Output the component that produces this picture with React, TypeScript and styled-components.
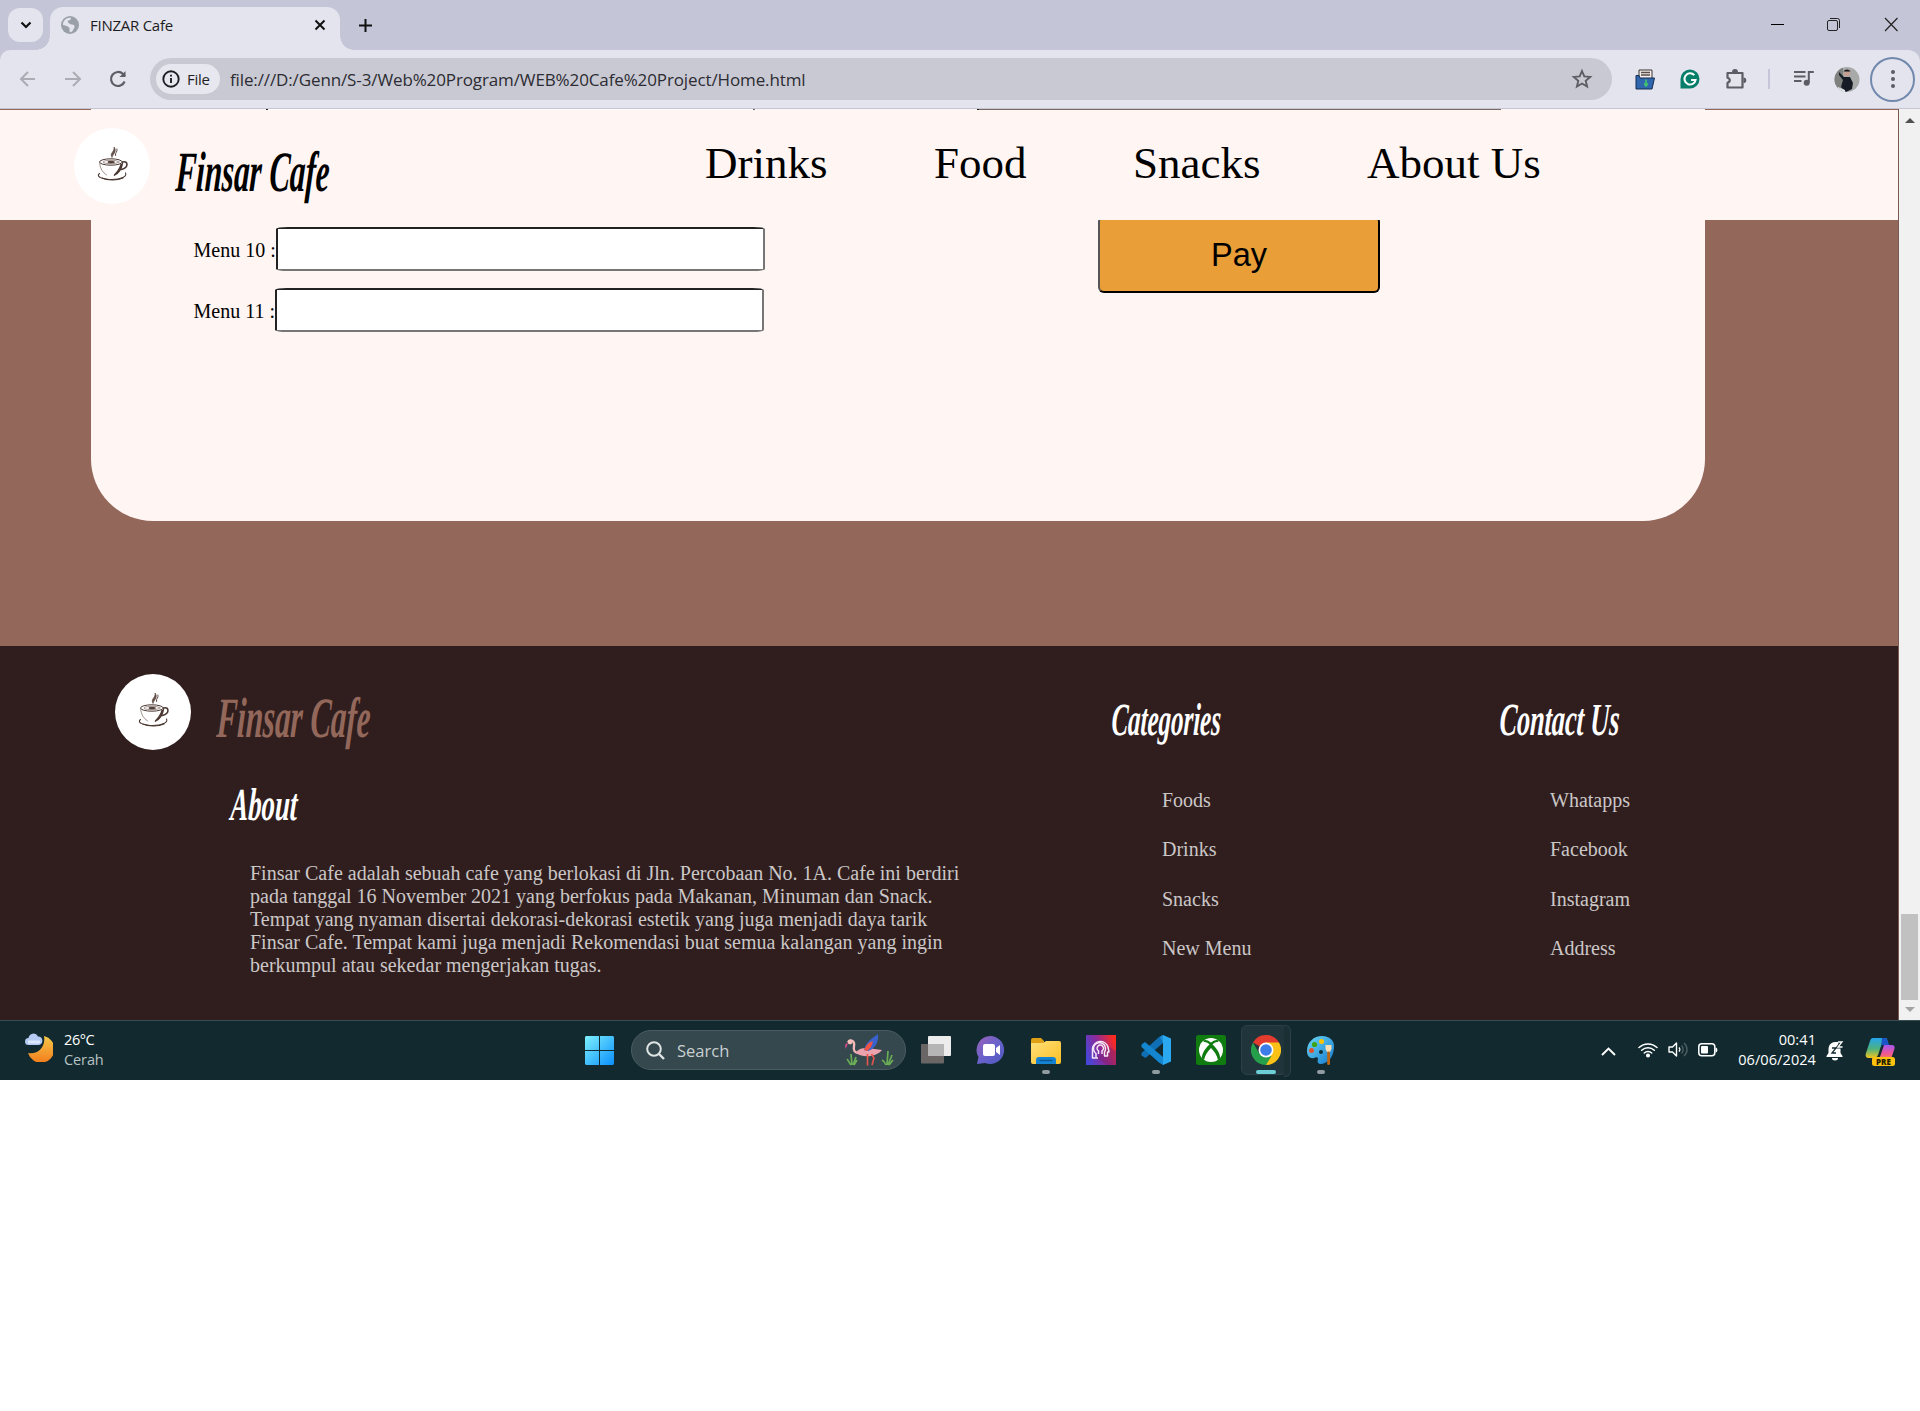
import React from "react";
import styled, { createGlobalStyle } from "styled-components";

const Global = createGlobalStyle`
  * { box-sizing: border-box; }
  body { margin: 0; background: #fff; }
`;

const UI = `"Open Sans", "Noto Sans", sans-serif`;
const SERIF = `"Liberation Serif", "Times New Roman", serif`;

const Screen = styled.div`
  width: 1920px;
  height: 1080px;
  display: flex;
  flex-direction: column;
  overflow: hidden;
`;

/* ---------- browser chrome ---------- */

const TabStrip = styled.div`
  height: 50px;
  flex: none;
  display: flex;
  align-items: flex-start;
  background: #c5c5d8;
  padding-left: 8px;
`;

const TabSearch = styled.div`
  width: 35px;
  height: 34px;
  margin-top: 8px;
  border-radius: 12px;
  background: #e4e4ee;
  display: grid;
  place-items: center;
`;

const Tab = styled.div`
  position: relative;
  width: 290px;
  height: 43px;
  margin: 7px 0 0 7px;
  padding: 0 13px 7px 11px;
  border-radius: 13px 13px 0 0;
  background: #e4e4ee;
  display: flex;
  align-items: center;
  &::before,
  &::after {
    content: "";
    position: absolute;
    bottom: 0;
    width: 14px;
    height: 14px;
  }
  &::before {
    left: -14px;
    background: radial-gradient(circle at 0 0, transparent 13.5px, #e4e4ee 14px);
  }
  &::after {
    right: -14px;
    background: radial-gradient(circle at 100% 0, transparent 13.5px, #e4e4ee 14px);
  }
`;

const TabTitle = styled.span`
  flex: 1;
  margin-left: 11px;
  font: 15px/20px ${UI};
  letter-spacing: -0.26px;
  color: #1c1c20;
`;

const NewTab = styled.div`
  margin: 18px 0 0 18px;
  height: 15px;
  display: flex;
`;

const WindowButtons = styled.div`
  margin: 17px 21px 0 auto;
  display: flex;
  gap: 42px;
`;

const ToolbarBack = styled.div`
  flex: none;
  height: 59px;
  background: #c5c5d8;
`;

const Toolbar = styled.div`
  height: 59px;
  display: flex;
  align-items: center;
  background: #e4e4ee;
  border-radius: 10px 12px 0 0;
  border-bottom: 1px solid #c5c5d3;
  padding-left: 19px;
`;

const NavIcons = styled.div`
  display: flex;
  gap: 27px;
  width: 131px;
`;

const Omnibox = styled.div`
  width: 1462px;
  height: 42px;
  border-radius: 21px;
  background: #c9c9d3;
  display: flex;
  align-items: center;
  padding: 0 19px 0 6px;
`;

const Chip = styled.div`
  width: 64px;
  height: 30px;
  border-radius: 15px;
  background: #e7e7f0;
  display: flex;
  align-items: center;
  gap: 7px;
  padding-left: 6px;
  font: 500 15px/20px ${UI};
  letter-spacing: -0.3px;
  color: #1f1f23;
`;

const Url = styled.span`
  flex: 1;
  margin: 1px 0 0 10px;
  font: 17px/24px ${UI};
  letter-spacing: -0.12px;
  color: #2c2c32;
  white-space: nowrap;
`;

const Extensions = styled.div`
  flex: 1;
  display: flex;
  align-items: center;
  padding-left: 21px;
`;

const Slot = styled.div<{ $w: number }>`
  width: ${(p) => p.$w}px;
  flex: none;
  display: flex;
  justify-content: center;
`;

const Separator = styled.div`
  width: 2px;
  height: 20px;
  margin: 0 11px 0 10px;
  background: #c5c5d8;
`;

const Avatar = styled.div`
  display: flex;
  margin-left: 8px;
`;

const MenuRing = styled.div`
  width: 45px;
  height: 45px;
  margin-left: 10px;
  border: 2px solid #7189ad;
  border-radius: 50%;
  display: flex;
  flex-direction: column;
  align-items: center;
  justify-content: center;
  gap: 3px;
`;

const Dot = styled.i`
  width: 4px;
  height: 4px;
  border-radius: 50%;
  background: #5b5e64;
`;

/* ---------- cafe page ---------- */

const Viewport = styled.div`
  height: 911px;
  flex: none;
  display: flex;
`;

const Page = styled.div`
  width: 1899px;
  border-right: 1px solid #7a5b52;
  background: #93685b;
  display: flex;
  flex-direction: column;
`;

const Sliver = styled.div`
  height: 1px;
  flex: none;
  background: linear-gradient(
    90deg,
    #93685b 91px,
    #fff5f2 91px 266px,
    #222 266px 268px,
    #fff 268px 753px,
    #666 753px 755px,
    #fff5f2 755px 977px,
    #222 977px 979px,
    #7c6964 979px 1501px,
    #fff5f2 1501px 1705px,
    #93685b 1705px
  );
`;

const Header = styled.header`
  height: 110px;
  flex: none;
  background: #fff5f2;
  display: flex;
  padding: 18px 0 0 74px;
`;

const BrandRow = styled.div`
  display: flex;
  width: 631px;
  height: 76px;
`;

const Circle = styled.div`
  width: 76px;
  height: 76px;
  flex: none;
  border-radius: 50%;
  background: #fff;
  display: grid;
  place-items: center;
`;

const Script = styled.span<{ $size: number; $scale: number; $color: string }>`
  display: block;
  width: max-content;
  height: ${(p) => p.$size}px;
  font: italic bold ${(p) => p.$size}px/${(p) => p.$size}px ${SERIF};
  color: ${(p) => p.$color};
  transform: scaleX(${(p) => p.$scale}) skewX(-5deg);
  transform-origin: 0 80%;
  white-space: nowrap;
`;

const BrandName = styled.div`
  margin: 15px 0 0 25px;
`;

const Nav = styled.nav`
  display: flex;
  gap: 106.5px;
  padding-top: 9px;
`;

const NavLink = styled.a`
  font: 45px/52px ${SERIF};
  color: #000;
  white-space: nowrap;
`;

const Main = styled.main`
  height: 426px;
  flex: none;
  padding: 0 193px 0 91px;
`;

const Card = styled.section`
  height: 301px;
  border-radius: 0 0 62px 62px;
  background: #fff5f2;
  display: flex;
  justify-content: space-between;
  padding: 7px 325px 0 102.5px;
`;

const Field = styled.label`
  display: flex;
  align-items: center;
  height: 44px;
  margin-bottom: 17px;
  font: 20px/23px ${SERIF};
  color: #000;
`;

const FieldName = styled.span`
  padding-top: 3px;
`;

const Input = styled.input`
  width: 489px;
  height: 44px;
  padding: 0;
  border: 2px solid;
  border-color: #222 #767676 #767676 #222;
  border-radius: 12px / 2px;
  background: #fff;
`;

const PayClip = styled.div`
  height: 73px;
  margin-top: -7px;
  overflow: hidden;
  display: flex;
  align-items: flex-end;
`;

const PayButton = styled.button`
  flex: none;
  width: 282px;
  height: 77px;
  padding: 0;
  border: 2px solid;
  border-color: #555 #000 #000 #555;
  border-radius: 6px;
  background: #e99e38;
  font: 32.5px/36px "Liberation Sans", Arial, sans-serif;
  color: #000;
`;

const Footer = styled.footer`
  height: 374px;
  flex: none;
  background: #301e1e;
  display: flex;
  padding: 28px 0 0 115px;
`;

const AboutCol = styled.div`
  width: 996px;
`;

const AboutTitle = styled.div`
  margin: 32px 0 0 115px;
`;

const Paragraph = styled.p`
  width: 720px;
  margin: 34px 0 0 135px;
  font: 20px/23px ${SERIF};
  color: #cbc7c7;
`;

const LinkCol = styled.div`
  width: 388px;
  padding-top: 23px;
`;

const LinkList = styled.ul`
  list-style: none;
  margin: 46px 0 0 51px;
  padding: 0;
  display: flex;
  flex-direction: column;
  gap: 26.3px;
`;

const LinkItem = styled.li`
  font: 20px/23px ${SERIF};
  color: #cbc7c7;
`;

const Scrollbar = styled.div`
  width: 21px;
  background: #f1f1f1;
  display: flex;
  flex-direction: column;
  align-items: center;
  justify-content: space-between;
  padding: 9px 0 8px;
`;

const Thumb = styled.div`
  width: 17px;
  height: 86px;
  margin: auto 0 7px;
  background: #c1c1c1;
`;

const Arrow = styled.div<{ $down?: boolean }>`
  width: 0;
  height: 0;
  border: 5px solid transparent;
  border-top: ${(p) => (p.$down ? "5px solid #a3a3a3" : "0")};
  border-bottom: ${(p) => (p.$down ? "0" : "5px solid #505050")};
`;

/* ---------- taskbar ---------- */

const Taskbar = styled.div`
  height: 60px;
  flex: none;
  background: #122a2f;
  border-top: 1px solid #3a4c50;
  display: flex;
  align-items: flex-start;
  padding: 0 25px;
`;

const Weather = styled.div`
  width: 560px;
  display: flex;
  gap: 11px;
  padding-top: 9px;
`;

const Stack = styled.div<{ $right?: boolean }>`
  font: 14.5px/20px ${UI};
  letter-spacing: ${(p) => (p.$right ? 0.08 : -0.4)}px;
  color: #fff;
  text-align: ${(p) => (p.$right ? "right" : "left")};
`;

const Muted = styled.div`
  color: #b9c2c4;
  letter-spacing: -0.1px;
`;

const StartIcon = styled.div`
  width: 46px;
  padding-top: 15px;
`;

const SearchBox = styled.div`
  width: 275px;
  height: 40px;
  margin-top: 9px;
  border-radius: 20px;
  border: 1px solid #4a5c61;
  background: #35484d;
  display: flex;
  align-items: center;
  padding: 0 11px 0 14px;
  font: 16.5px/22px ${UI};
  letter-spacing: 0;
  color: #c9d0d2;
`;

const SearchLabel = styled.span`
  flex: 1;
  margin: 1px 0 0 12px;
`;

const Apps = styled.div`
  display: flex;
  gap: 5px;
  margin: 4px 0 0 5px;
`;

const AppTile = styled.div<{ $active?: boolean }>`
  position: relative;
  width: 50px;
  height: 50px;
  padding-top: 10px;
  display: flex;
  justify-content: center;
  align-items: flex-start;
  ${(p) =>
    p.$active &&
    `&::before {
      content: "";
      position: absolute;
      inset: 0 1px 0 0;
      border-radius: 6px;
      border: 1px solid #2c4147;
      background: #20353b;
      left: 0;
      width: 44px;
    }
    &::after {
      content: "";
      position: absolute;
      top: 0;
      right: 0;
      width: 6px;
      height: 50px;
      border: 1px solid #2c4147;
      border-left: 0;
      border-radius: 0 6px 6px 0;
      background: #1a3035;
    }`}
  svg { position: relative; }
`;

const Indicator = styled.i<{ $active?: boolean }>`
  position: absolute;
  bottom: 1px;
  left: ${(p) => (p.$active ? 15 : 21)}px;
  width: ${(p) => (p.$active ? 20 : 8)}px;
  height: 4px;
  border-radius: 2px;
  background: ${(p) => (p.$active ? "#6ccfd8" : "#8f9b9e")};
`;

const Tray = styled.div`
  margin-left: auto;
  display: flex;
  align-items: flex-start;
`;

const TrayIcon = styled.div<{ $w: number; $top: number }>`
  width: ${(p) => p.$w}px;
  padding-top: ${(p) => p.$top}px;
`;

const Clock = styled.div`
  width: 88px;
  margin-right: 10px;
  padding-top: 9px;
`;

/* ---------- drawings ---------- */

const CupDrawing = styled.svg`
  margin: -5px 0 0 2px;
`;

const Cup = () => (
  <CupDrawing width="32" height="38" viewBox="0 0 32 38" fill="none">
    <g stroke="#4b3832" strokeLinecap="round">
      <path d="M15 12c-3-4 3-5 2-10 3 4 0 6-2 10z" fill="#6a554e" strokeWidth=".6" />
      <path d="M18.500 10.500c-1-3 2.500-3.500 1.500-6.500" strokeWidth=".9" />
      <ellipse cx="14" cy="17" rx="11.500" ry="3.200" strokeWidth="1" />
      <ellipse cx="14" cy="17" rx="8" ry="1.700" stroke="#8b7a74" strokeWidth=".8" />
      <ellipse cx="14" cy="17.100" rx="3.200" ry=".8" fill="#4b3832" />
      <path d="M2.600 18.500c.5 5 3 9 7 11.500" stroke="#8b7a74" strokeWidth=".8" />
      <path d="M25.500 18.500c-1 6-4 10-8.500 12 3-3 6-7 7-11" strokeWidth="1.300" fill="#4b3832" />
      <path d="M26 17c5-1.500 6 5.500-1.500 7.500" strokeWidth="1.600" />
      <path d="M2.500 28.500c-4 3 3 6 12 6 9.500 0 16-3 14-6.500" strokeWidth="1.100" />
      <path d="M5 33c5 2.300 15 2.800 21 0" strokeWidth="1.200" />
    </g>
  </CupDrawing>
);

const Globe = () => (
  <svg width="18" height="18" viewBox="0 0 18 18">
    <circle cx="9" cy="9" r="9" fill="#9aa0a8" />
    <path d="M3 5c2-3 5-3.500 7-3 0 2-1 2-2.500 2.500S7 7 9 8s4 0 4.500 2-1.500 3-2 5c-1 1.500-3 1.500-3 0 0-2 .5-3-1-4S4 9 2 9c0-1 0-3 1-4z" fill="#e4e4ee" />
  </svg>
);

const BackArrow = ({ flip }: { flip?: boolean }) => (
  <svg width="18" height="18" viewBox="0 0 18 18" fill="none" stroke="#acacb5" strokeWidth="2">
    <path d={flip ? "M1 9h14M9 2l7 7-7 7" : "M16 9H2M9 2L2 9l7 7"} />
  </svg>
);

const Reload = () => (
  <svg width="18" height="18" viewBox="0 0 18 18" fill="none" stroke="#5b5e64" strokeWidth="2.200">
    <path d="M15.600 11.500A7 7 0 1 1 14 4l2 2" />
    <path d="M16.500 1v6h-6z" fill="#5b5e64" stroke="none" />
  </svg>
);

const Folder = () => (
  <svg width="32" height="30" viewBox="0 0 32 30">
    <path d="M1 5a2 2 0 0 1 2-2h8l3 3v5H1z" fill="#e0a015" />
    <path d="M1 8h12l3-2h13a2 2 0 0 1 2 2v19a2 2 0 0 1-2 2H3a2 2 0 0 1-2-2z" fill="url(#fo)" />
    <path d="M6 29v-4a3 3 0 0 1 3-3h14a3 3 0 0 1 3 3v4z" fill="#1583d2" />
    <path d="M9.500 25.500h13" stroke="#0a5491" strokeWidth="1.300" />
    <defs>
      <linearGradient id="fo" x2="1" y2="1"><stop stopColor="#ffe07a" /><stop offset="1" stopColor="#fcbf25" /></linearGradient>
    </defs>
  </svg>
);

const Chat = () => (
  <svg width="30" height="30" viewBox="0 0 30 30">
    <defs>
      <linearGradient id="ch" x2="1" y2="1"><stop stopColor="#9b62b8" /><stop offset=".5" stopColor="#6a62cc" /><stop offset="1" stopColor="#4d58c0" /></linearGradient>
    </defs>
    <path d="M15 1a14 14 0 1 1-6 27l-8 1 1.500-7A14 14 0 0 1 15 1z" fill="url(#ch)" />
    <rect x="7" y="9" width="12" height="12" rx="2" fill="#fff" />
    <path d="M20 13l4-3v10l-4-3z" fill="#fff" />
  </svg>
);

const HeadApp = () => (
  <svg width="30" height="30" viewBox="0 0 30 30" fill="none">
    <defs>
      <linearGradient id="hd" x1="0" y1=".7" x2="1" y2=".3"><stop stopColor="#4846d8" /><stop offset=".5" stopColor="#8d2a9a" /><stop offset="1" stopColor="#ff2a20" /></linearGradient>
    </defs>
    <rect width="30" height="30" fill="url(#hd)" />
    <path d="M10 23l11 7h9V16l-7-4z" fill="#7a1f6e" opacity=".45" />
    <g stroke="#f3e6f5" strokeWidth="1.500" strokeLinejoin="round">
      <path d="M12 23H6.500V13.500a8 8 0 0 1 15.500-1.500l1 5h-1.500v4H18" />
      <path d="M10 22.500v-4a6 6 0 1 1 8.500-1.500v4" />
      <path d="M12.500 19v-3a3.200 3.200 0 1 1 3.500 0v3" />
    </g>
  </svg>
);

const Code = () => (
  <svg width="30" height="30" viewBox="0 0 30 30">
    <path d="M22 0v8L4.500 23 .5 20.500v-2.500L18 2z" fill="#0f6fb5" />
    <path d="M.5 9.500L4 7l18 15v8l-4-2.500L.5 12z" fill="#1486d0" />
    <path d="M22 0l8 3.500v23L22 30z" fill="#2ba9f0" />
    <path d="M22 0l-3 2 3 6z" fill="#1b8ed6" />
  </svg>
);

const Xbox = () => (
  <svg width="30" height="30" viewBox="0 0 30 30">
    <rect width="30" height="30" rx="2.500" fill="#107c10" />
    <circle cx="15" cy="15" r="12" fill="#fff" />
    <path d="M7 5.500c3-1.500 6 .5 8 2 2-1.500 5-3.500 8-2l-1 1.500c-2-.4-4 1-5.500 2.500 4.500 4 8 9.500 7.500 14l-2 1.500c-1-5-4-9-7-12-3 3-6 7-7 12l-2-1.500c-.5-4.500 3-10 7.500-14C12 8 10 6.600 8 7z" fill="#107c10" />
  </svg>
);

const Chrome = () => (
  <svg width="30" height="30" viewBox="0 0 30 30">
    <path d="M15 15L2 7.500a15 15 0 0 1 26 0z" fill="#e33b2e" />
    <path d="M15 15V7.500h13A15 15 0 0 1 15 30z" fill="#fbc116" />
    <path d="M2 7.500L8.500 19 15 22l5.500-1L15 30A15 15 0 0 1 2 7.500z" fill="#269f4b" />
    <circle cx="15" cy="15" r="7.500" fill="#fff" />
    <circle cx="15" cy="15" r="5.800" fill="#3c7de8" />
  </svg>
);

const Paint = () => (
  <svg width="30" height="30" viewBox="0 0 30 30">
    <defs>
      <linearGradient id="pa" x2="1" y2="1"><stop stopColor="#6ad8f5" /><stop offset="1" stopColor="#1479cf" /></linearGradient>
    </defs>
    <path d="M16 1c8 0 13 5 12 12-1 9-5 15-13 16-3 0-4-2-3-5 0-2-2-2-4-1-4 1-7-2-7-7C1 7 8 1 16 1z" fill="url(#pa)" />
    <circle cx="8.500" cy="9.500" r="2.600" fill="#3da514" />
    <circle cx="15.500" cy="6.500" r="2.500" fill="#ffc400" />
    <circle cx="5.500" cy="15.500" r="2.500" fill="#e0502e" />
    <circle cx="15" cy="17" r="2" fill="#12303a" />
    <path d="M19.500 10h6v4l-1.500 3h-3l-1.500-3z" fill="#f4dcb6" />
    <rect x="21.200" y="16.500" width="2.800" height="13.500" rx="1.300" fill="#bb6412" />
  </svg>
);

const Flamingo = () => (
  <svg width="50" height="32" viewBox="0 0 50 32" fill="none">
    <path d="M4 8c3-3 7-1 6 4-1 5 1 7 5 7" stroke="#f2b8b8" strokeWidth="2.400" />
    <circle cx="6" cy="8" r="2.400" fill="#f4c0b8" />
    <path d="M3.500 8l-2.500 3 .5 4 2-4z" fill="#cf4a8a" />
    <path d="M12 18c5-5 10-4 15-3.500l11 1.500c-4 6-18 9-26 3z" fill="#eba3ad" />
    <path d="M20 16C22 7 29 4 34 0c1 8-3 15-10 17z" fill="#3a62cf" />
    <path d="M20 16c2-5 5-8 9-9-1 5-3 8-6 10z" fill="#f0533f" />
    <path d="M23.500 20v11.500m4-11.500l2.500 4-2 7" stroke="#e8554c" strokeWidth="1.600" />
    <path d="M7 31c-2-3-3-5-4-6m5 6l-1-11m2 11l3-8m-2 8l3-5M42 31c-1-3-2-4-4-5m5 5l1-14m0 14l4-10m-3 10l4-5" stroke="#69ad55" strokeWidth="1.700" />
  </svg>
);

const Copilot = () => (
  <svg width="31" height="30" viewBox="0 0 31 30">
    <defs>
      <linearGradient id="c1" x2="0" y2="1"><stop stopColor="#22a5ee" /><stop offset=".55" stopColor="#4fb27c" /><stop offset="1" stopColor="#f2c51c" /></linearGradient>
      <linearGradient id="c2" x2="0" y2="1"><stop stopColor="#a557ee" /><stop offset=".6" stopColor="#ee5796" /><stop offset="1" stopColor="#f58350" /></linearGradient>
    </defs>
    <path d="M8 1h12c2 0 3 2 2 5H17l-4 12c-1 2-2 3-4 3H4c-3 0-4-2-3-5L5 4c.6-2 1.500-3 3-3z" fill="url(#c1)" />
    <path d="M17 1h3c2 0 3 3 4 7h-7l-1 2z" fill="#1d55c9" />
    <path d="M19 8h8c3 0 3 3 2 5l-3 9H12c2 0 3-2 4-5z" fill="url(#c2)" />
    <rect x="7" y="20" width="23" height="9" rx="2.500" fill="#fdc20d" />
    <text x="18.500" y="27.500" textAnchor="middle" fontFamily="Open Sans, sans-serif" fontWeight="800" fontSize="8" fill="#241c00">PRE</text>
  </svg>
);

const Logo = ({ color }: { color: string }) => (
  <>
    <Circle><Cup /></Circle>
    <BrandName>
      <Script $size={57} $scale={0.543} $color={color}>Finsar Cafe</Script>
    </BrandName>
  </>
);

const columns = [
  { title: "Categories", scale: 0.542, items: ["Foods", "Drinks", "Snacks", "New Menu"] },
  { title: "Contact Us", scale: 0.569, items: ["Whatapps", "Facebook", "Instagram", "Address"] },
];

export default function App() {
  return (
    <>
      <Global />
      <Screen>
        <TabStrip>
          <TabSearch>
            <svg width="12" height="8" viewBox="0 0 12 8" fill="none" stroke="#111" strokeWidth="2.200"><path d="M1.500 1.500L6 6l4.500-4.500" /></svg>
          </TabSearch>
          <Tab>
            <Globe />
            <TabTitle>FINZAR Cafe</TabTitle>
            <svg width="14" height="14" viewBox="0 0 14 14" stroke="#111" strokeWidth="2"><path d="M2.500 2.500l9 9m0-9l-9 9" /></svg>
          </Tab>
          <NewTab>
            <svg width="15" height="15" viewBox="0 0 15 15" stroke="#111" strokeWidth="2"><path d="M7.500 1v13M1 7.500h13" /></svg>
          </NewTab>
          <WindowButtons>
            <svg width="15" height="15" viewBox="0 0 15 15" stroke="#000"><path d="M1 7.500h13" /></svg>
            <svg width="15" height="15" viewBox="0 0 15 15" stroke="#222" fill="none"><rect x=".5" y="3.500" width="10" height="10" rx="1.500" /><path d="M3 1.500h7.500a2 2 0 0 1 2 2V11" /></svg>
            <svg width="15" height="15" viewBox="0 0 15 15" stroke="#222" strokeWidth="1.200"><path d="M1 1l12.500 13m0-13L1 14" /></svg>
          </WindowButtons>
        </TabStrip>
        <ToolbarBack>
          <Toolbar>
            <NavIcons><BackArrow /><BackArrow flip /><Reload /></NavIcons>
            <Omnibox>
              <Chip>
                <svg width="18" height="18" viewBox="0 0 18 18" fill="none" stroke="#1f1f23" strokeWidth="1.900"><circle cx="9" cy="9" r="7.700" /><path d="M9 8v5M9 4.700v1.900" /></svg>
                File
              </Chip>
              <Url>file:///D:/Genn/S-3/Web%20Program/WEB%20Cafe%20Project/Home.html</Url>
              <svg width="22" height="22" viewBox="0 0 22 22" fill="none" stroke="#5b5e64" strokeWidth="1.900"><path d="M11 3l2.300 5.400 5.900.5-4.500 3.900 1.400 5.700-5.100-3-5.100 3 1.400-5.700-4.500-3.900 5.900-.5z" /></svg>
            </Omnibox>
            <Extensions>
              <Slot $w={24}>
                <svg width="21" height="21" viewBox="0 0 21 21"><path d="M4 1h13v9H4z" fill="#f3ece8" stroke="#3b3534" /><path d="M6 3.500h9M6 6h9" stroke="#5b4d4a" strokeWidth="1.300" /><path d="M1 6.500h3l1 2.500h14.500L17 20H1z" fill="#2f66ae" stroke="#152d50" /><path d="M11 10.500v6M9.200 14.500l1.800 2.500 1.800-2.500" stroke="#43c768" strokeWidth="1.500" fill="none" /></svg>
              </Slot>
              <Slot $w={66}>
                <svg width="20" height="20" viewBox="0 0 20 20" fill="none"><path d="M10 .5A9.500 9.500 0 1 1 10 19.500H.5V10A9.500 9.500 0 0 1 10 .5z" fill="#077e69" /><path d="M14.300 6.200A5.600 5.600 0 1 0 15.600 11h-4.500" stroke="#fff" strokeWidth="2" /></svg>
              </Slot>
              <Slot $w={25}>
                <svg width="23" height="23" viewBox="0 0 23 23"><path d="M3.500 5h15v14.500h-15v-4.800c3-1 3-4 0-5z" fill="none" stroke="#5b5e64" strokeWidth="2.200" strokeLinejoin="round" /><path d="M8 4a3 3 0 0 1 6 0zM19.500 9.500a2.800 2.800 0 0 1 0 5.600z" fill="#5b5e64" /></svg>
              </Slot>
              <Slot $w={10} />
              <Separator />
              <Slot $w={44}>
                <svg width="21" height="18" viewBox="0 0 21 18" fill="none" stroke="#5b5e64" strokeWidth="2"><path d="M1 2h11.500M1 6.500h11.500M1 11h7.500M15.800 12.500V2h5" /><circle cx="13.700" cy="12.800" r="3" fill="#5b5e64" stroke="none" /></svg>
              </Slot>
              <Avatar>
                <svg width="27" height="25" viewBox="0 0 27 25"><defs><clipPath id="av"><circle cx="14" cy="12.500" r="12.500" /></clipPath></defs><g clipPath="url(#av)"><path d="M0 0h27v25H0z" fill="#a7aaa9" /><path d="M0 0h10v25H0z" fill="#7f817f" /><path d="M6 5l5 5h6l3 6-1 6-6 3-5-5 2-7-4-5z" fill="#171b25" /><circle cx="14" cy="6" r="3.200" fill="#c59d91" /><path d="M10.500 4.500a4 4 0 0 1 7 0z" fill="#15171e" /><path d="M5 20l7 3v3H4z" fill="#dfe5e8" /></g></svg>
              </Avatar>
              <MenuRing><Dot /><Dot /><Dot /></MenuRing>
            </Extensions>
          </Toolbar>
        </ToolbarBack>

        <Viewport>
          <Page>
            <Sliver />
            <Header>
              <BrandRow><Logo color="#000" /></BrandRow>
              <Nav>
                {["Drinks", "Food", "Snacks", "About Us"].map((t) => <NavLink key={t}>{t}</NavLink>)}
              </Nav>
            </Header>
            <Main>
              <Card>
                <div>
                  <Field><FieldName>Menu 10 :</FieldName><Input /></Field>
                  <Field><FieldName>Menu 11 :</FieldName><Input /></Field>
                </div>
                <PayClip><PayButton>Pay</PayButton></PayClip>
              </Card>
            </Main>
            <Footer>
              <AboutCol>
                <BrandRow><Logo color="#93685b" /></BrandRow>
                <AboutTitle><Script $size={46} $scale={0.58} $color="#fff">About</Script></AboutTitle>
                <Paragraph>
                  Finsar Cafe adalah sebuah cafe yang berlokasi di Jln. Percobaan No. 1A. Cafe ini berdiri pada tanggal 16 November 2021 yang berfokus pada Makanan, Minuman dan Snack. Tempat yang nyaman disertai dekorasi-dekorasi estetik yang juga menjadi daya tarik Finsar Cafe. Tempat kami juga menjadi Rekomendasi buat semua kalangan yang ingin berkumpul atau sekedar mengerjakan tugas.
                </Paragraph>
              </AboutCol>
              {columns.map((c) => (
                <LinkCol key={c.title}>
                  <Script $size={46} $scale={c.scale} $color="#fff">{c.title}</Script>
                  <LinkList>{c.items.map((i) => <LinkItem key={i}>{i}</LinkItem>)}</LinkList>
                </LinkCol>
              ))}
            </Footer>
          </Page>
          <Scrollbar><Arrow /><Thumb /><Arrow $down /></Scrollbar>
        </Viewport>

        <Taskbar>
          <Weather>
            <svg width="28" height="32" viewBox="0 0 28 32">
              <defs><linearGradient id="mo" x2="0" y2="1"><stop stopColor="#f6c94a" /><stop offset="1" stopColor="#f37d1c" /></linearGradient></defs>
              <path d="M19 6a13.500 13.500 0 1 1-16 17c10 2 18-6 16-17z" fill="url(#mo)" />
              <path d="M3.500 15a3.500 3.500 0 0 1 0-7 5 5 0 0 1 9.500-1.500A4.300 4.300 0 0 1 14 15z" fill="#b4caf2" />
              <path d="M3 12h12" stroke="#dce8fc" strokeWidth="3" />
            </svg>
            <Stack><div>26°C</div><Muted>Cerah</Muted></Stack>
          </Weather>
          <StartIcon>
            <svg width="29" height="29" viewBox="0 0 29 29"><defs><linearGradient id="wi" gradientUnits="userSpaceOnUse" x1="0" y1="0" x2="29" y2="29"><stop stopColor="#7df0ff" /><stop offset="1" stopColor="#0a8ffb" /></linearGradient></defs><path d="M1 0h13v14H0V1zM15 0h13l1 1v13H15zM0 15h14v14H1l-1-1zM15 15h14v13l-1 1H15z" fill="url(#wi)" /></svg>
          </StartIcon>
          <SearchBox>
            <svg width="19" height="19" viewBox="0 0 19 19" fill="none" stroke="#dfe4e5" strokeWidth="2"><circle cx="8" cy="8" r="6.800" /><path d="M13 13l5 5" strokeWidth="2.400" /></svg>
            <SearchLabel>Search</SearchLabel>
            <Flamingo />
          </SearchBox>
          <Apps>
            <AppTile>
              <svg width="30" height="30" viewBox="0 0 30 30"><rect y="9" width="23" height="19.500" rx="1" fill="#6b6666" /><rect x="7" y="1" width="23" height="20" rx="1" fill="#ececec" /><path d="M7 9h16v12H7z" fill="#b5b5b5" /></svg>
            </AppTile>
            <AppTile><Chat /></AppTile>
            <AppTile><Folder /><Indicator /></AppTile>
            <AppTile><HeadApp /></AppTile>
            <AppTile><Code /><Indicator /></AppTile>
            <AppTile><Xbox /></AppTile>
            <AppTile $active><Chrome /><Indicator $active /></AppTile>
            <AppTile><Paint /><Indicator /></AppTile>
          </Apps>
          <Tray>
            <TrayIcon $w={37} $top={23}>
              <svg width="15" height="11" viewBox="0 0 15 11" fill="none" stroke="#fff" strokeWidth="1.900"><path d="M1 8l6.500-6.500L14 8" /></svg>
            </TrayIcon>
            <TrayIcon $w={30} $top={20}>
              <svg width="20" height="17" viewBox="0 0 20 17" fill="none" stroke="#fff" strokeWidth="1.500" strokeLinecap="round"><path d="M1 6.500a13 13 0 0 1 18 0M3.700 9.300a9 9 0 0 1 12.600 0M6.300 12a5.300 5.300 0 0 1 7.400 0" /><circle cx="10" cy="14.500" r="1.300" fill="#fff" /></svg>
            </TrayIcon>
            <TrayIcon $w={30} $top={20}>
              <svg width="20" height="17" viewBox="0 0 20 17" fill="none" stroke="#fff" strokeWidth="1.400" strokeLinejoin="round"><path d="M1 6h3.500l4-4v13l-4-4H1zM11 6.500c1 1 1 3 0 4" /><path d="M13.500 4.500c2.200 2 2.200 6 0 8M16 2c4 3.500 4 9.500 0 13" stroke="#4a5f64" /></svg>
            </TrayIcon>
            <TrayIcon $w={30} $top={22}>
              <svg width="20" height="14" viewBox="0 0 20 14"><rect x=".8" y=".8" width="16" height="12" rx="3" fill="none" stroke="#fff" strokeWidth="1.500" /><rect x="3" y="3" width="7" height="7.600" rx="1" fill="#fff" /><path d="M17.500 4.500c2.500 0 2.500 5 0 5z" fill="#fff" /></svg>
            </TrayIcon>
            <Clock><Stack $right><div>00:41</div><div>06/06/2024</div></Stack></Clock>
            <TrayIcon $w={39} $top={19}>
              <svg width="18" height="21" viewBox="0 0 18 21"><path d="M9 2a6.500 6.500 0 0 0-6.500 6.500V13L.5 16v1h16v-1l-2-3V8.500L13 2zM6 18h6a3 2.500 0 0 1-6 0z" fill="#fff" /><path d="M6 8h4l-4 5h4" fill="none" stroke="#122a2f" strokeWidth="1.300" /><path d="M12 2h4l-4 5h4.500" fill="none" stroke="#122a2f" strokeWidth="3" /><path d="M12 2h4l-4 5h4.500" fill="none" stroke="#fff" strokeWidth="1.300" /></svg>
            </TrayIcon>
            <TrayIcon $w={30} $top={16}><Copilot /></TrayIcon>
          </Tray>
        </Taskbar>
      </Screen>
    </>
  );
}
